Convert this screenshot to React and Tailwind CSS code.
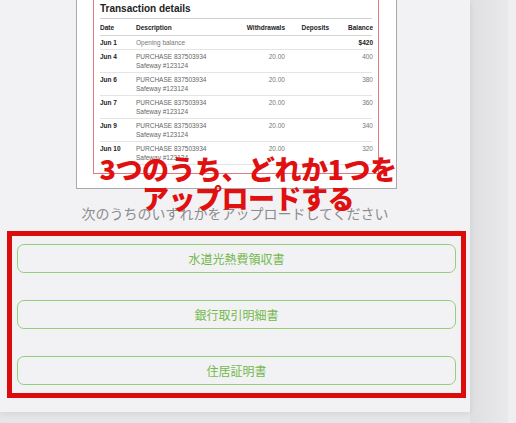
// Upload step: sample bank statement preview and the three document choices
const rows = [
  { date: "Jun 4", w: "20.00", bal: "400" },
  { date: "Jun 6", w: "20.00", bal: "380" },
  { date: "Jun 7", w: "20.00", bal: "360" },
  { date: "Jun 9", w: "20.00", bal: "340" },
  { date: "Jun 10", w: "20.00", bal: "320" },
];

const docs = ["水道光熱費領収書", "銀行取引明細書", "住居証明書"];

const cols = "grid grid-cols-[36px_105px_44px_44px_44px]";

const StatementPreview = () => (
  <div className="ml-[76px] w-[321px] h-[189px] bg-white border-x border-b border-[#a9a9ab] font-['Liberation_Sans',Arial,sans-serif] text-[#222]">
    <div className="ml-[16px] w-[286px] h-[174px] border-x border-b border-[#e07a84] px-[6px] overflow-hidden">
      <div className="pt-[2px] pb-[2px] leading-[14px] text-[10px] font-bold border-b border-[#cfcfcf]">
        Transaction details
      </div>
      <div className={`${cols} pt-[4px] pb-[3px] leading-[9px] text-[6.5px] font-bold border-b border-[#d5d5d5]`}>
        <span>Date</span>
        <span>Description</span>
        <span className="text-right -mr-[4px] pr-[4px]">Withdrawals</span>
        <span className="text-right">Deposits</span>
        <span className="text-right">Balance</span>
      </div>
      <div className={`${cols} py-[2px] leading-[9px] text-[6.5px] border-b border-[#e4e4e4]`}>
        <span className="font-bold">Jun 1</span>
        <span className="text-[#777]">Opening balance</span>
        <span />
        <span />
        <span className="text-right font-bold">$420</span>
      </div>
      {rows.map((r) => (
        <div key={r.date} className={`${cols} py-[2px] leading-[9px] text-[6.5px] border-b border-[#e4e4e4]`}>
          <span className="font-bold">{r.date}</span>
          <span className="text-[#666]">
            PURCHASE 837503934
            <br />
            Safeway #123124
          </span>
          <span className="text-right text-[#777]">{r.w}</span>
          <span />
          <span className="text-right text-[#777]">{r.bal}</span>
        </div>
      ))}
    </div>
  </div>
);

export default function App() {
  return (
    <div className="w-[516px] h-[423px] flex bg-[#e6e6e8] overflow-hidden font-['Noto_Sans_CJK_JP','Noto_Sans',sans-serif]">
      <div className="relative w-[470px] h-[412px] bg-[#f2f2f4] shadow-[0_2px_6px_rgba(0,0,0,0.08)] flex flex-col shrink-0">
        <StatementPreview />

        <p className="mt-[14px] text-center text-[14px] leading-[20px] text-[#8c8c8e]">
          次のうちのいずれかをアップロードしてください
        </p>

        <div className="mt-[8px] ml-[7px] w-[459px] border-[5px] border-[#dc0c0c] px-[5px] py-[8px] flex flex-col gap-[27px]">
          {docs.map((d) => (
            <button
              key={d}
              className="h-[29px] rounded-[7px] border border-[#95cf7b] text-[12px] text-[#73b84c] bg-[#f2f2f4]"
            >
              {d}
            </button>
          ))}
        </div>

        {/* callout over the preview */}
        <div className="absolute left-[93px] top-[154px] w-[310px] text-center text-[27px] leading-[29px] font-black text-[#e01010] tracking-[-0.5px]">
          3つのうち、どれか1つを
          <br />
          アップロードする
        </div>
      </div>
      <div className="w-[38px] h-full bg-gradient-to-r from-[#dfdfe1] to-[#e9e9eb]" />
      <div className="flex-1 h-full bg-[#efeff1]" />
    </div>
  );
}
